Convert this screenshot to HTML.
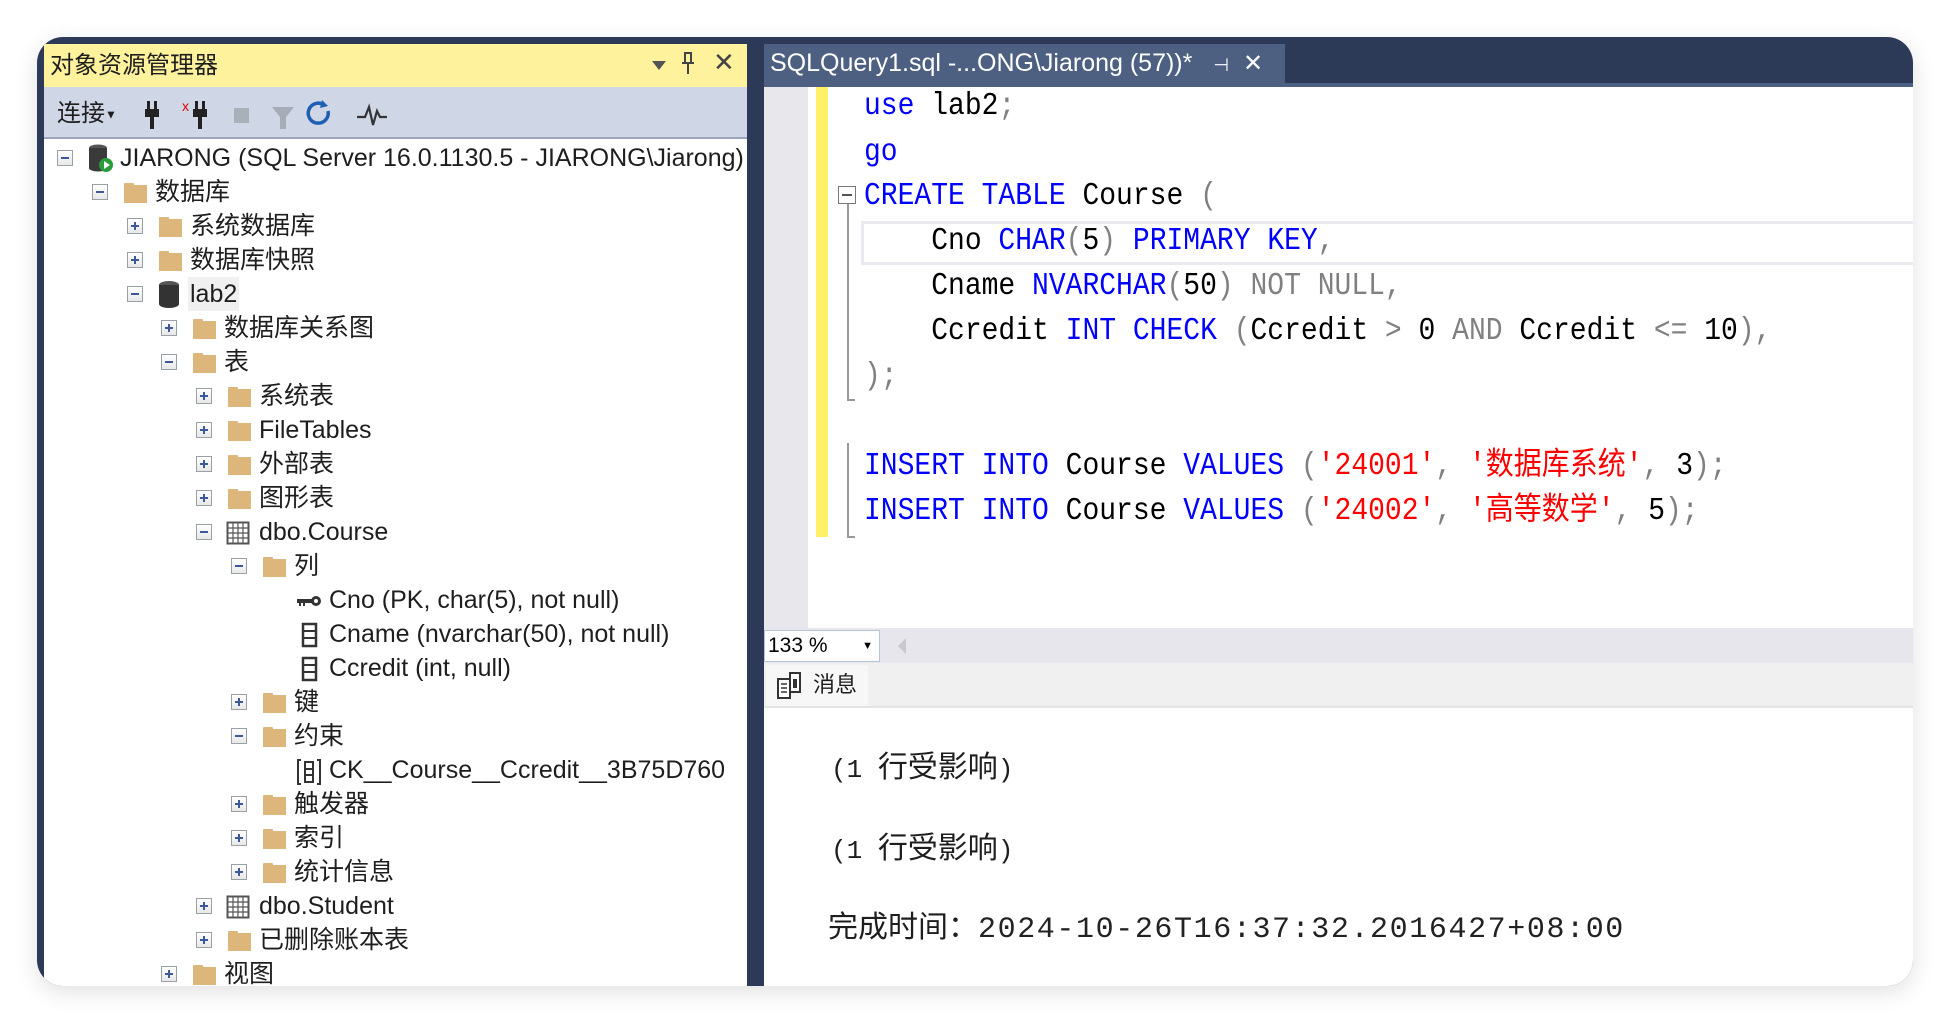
<!DOCTYPE html>
<html><head><meta charset="utf-8"><style>
*{margin:0;padding:0;box-sizing:border-box}
body{width:1950px;height:1024px;background:#fff;position:relative;overflow:hidden;font-family:"Liberation Sans","Noto Sans CJK SC",sans-serif}
#win{position:absolute;left:37px;top:37px;width:1876px;height:949px;background:#2c3a57;border-radius:26px 26px 26px 26px;overflow:hidden;box-shadow:0 6px 24px rgba(0,0,0,.12)}
.a{position:absolute}
.r{position:absolute;height:34px;line-height:34px;display:flex;align-items:center;font-size:25px;color:#1e1e1e;white-space:nowrap}
.ex{width:16px;height:16px;border:1px solid #9aa0a8;background:linear-gradient(#fff,#e8e8e8);margin-right:14px;position:relative;flex:none}
.ex.m:before,.ex.p:before{content:"";position:absolute;left:3px;top:6px;width:8px;height:2px;background:#3c5a99}
.ex.p:after{content:"";position:absolute;left:6px;top:3px;width:2px;height:8px;background:#3c5a99}
.ex.n{visibility:hidden}
.ic{width:26px;height:24px;margin-right:7px;flex:none;position:relative}
.fo:before{content:"";position:absolute;left:2px;top:3px;width:10px;height:4px;background:#dcb67a;border-radius:1px 1px 0 0}
.fo:after{content:"";position:absolute;left:2px;top:5px;width:23px;height:18px;background:#dcb67a}
.code{position:absolute;left:864px;font-family:"Liberation Mono","Noto Sans CJK SC",monospace;font-size:28px;height:45px;line-height:45px;white-space:pre;color:#000;transform:scaleY(1.12);transform-origin:left center}
.k{color:#0000ff}.g{color:#808080}.s{color:#ff0000}
</style></head><body>
<div id="win">
 <div class="a" style="left:7px;top:7px;width:703px;height:950px;background:#fff"></div>
 <div class="a" style="left:7px;top:7px;width:703px;height:43px;background:#fff29d;font-size:24px;line-height:43px;padding-left:6px;color:#1e1e1e">对象资源管理器</div>
 <div class="a" style="left:615px;top:24px;width:0;height:0;border-left:7px solid transparent;border-right:7px solid transparent;border-top:9px solid #555"></div>
 <svg class="a" style="left:643px;top:14px" width="16" height="24"><path d="M4 2h8M5 2v10M11 2v10M2 12h12M8 12v11" stroke="#444" stroke-width="2" fill="none"/></svg>
 <div class="a" style="left:676px;top:10px;font-size:26px;color:#444">✕</div>
 <div class="a" style="left:7px;top:50px;width:703px;height:52px;background:#cfd6e5;border-bottom:2px solid #9aa5bb"></div>
 <div class="a" style="left:20px;top:60px;font-size:24px;line-height:34px;color:#1e1e1e">连接<span style="font-size:12px;vertical-align:middle">▼</span></div>
 <svg class="a" style="left:105px;top:62px" width="190" height="32" viewBox="0 0 190 32">
  <g fill="#222"><rect x="5" y="2" width="3" height="8"/><rect x="12" y="2" width="3" height="8"/><rect x="3" y="10" width="14" height="8"/><rect x="8" y="18" width="4" height="12"/></g>
  <g fill="#222"><rect x="53" y="2" width="3" height="8"/><rect x="60" y="2" width="3" height="8"/><rect x="51" y="10" width="14" height="8"/><rect x="56" y="18" width="4" height="12"/></g>
  <text x="40" y="12" fill="#d00" font-size="14" font-family="Liberation Sans">x</text>
  <rect x="92" y="9" width="15" height="15" fill="#aab0ba"/>
  <path d="M130 8h22l-8 10v12h-6v-12z" fill="#a7adb8"/>
  <path d="M186 12a10 10 0 1 1-4-6" fill="none" stroke="#1e5fb3" stroke-width="3.5"/><path d="M180 1l6 6-8 2z" fill="#1e5fb3"/>
 </svg>
 <svg class="a" style="left:318px;top:64px" width="34" height="28"><path d="M2 16h8l4-10 4 18 4-14 3 6h7" fill="none" stroke="#333" stroke-width="2.2"/></svg>

 <div style="position:absolute;left:-37px;top:-37px">
 <div class="r" style="left:57px;top:141px"><span class="ex m"></span><span class="ic"><svg width="26" height="30" style="position:absolute;top:-3px"><ellipse cx="11" cy="5" rx="9" ry="3.5" fill="#555"/><rect x="2" y="5" width="18" height="20" fill="#3a3a3a"/><ellipse cx="11" cy="25" rx="9" ry="3.5" fill="#3a3a3a"/><circle cx="19" cy="22" r="7" fill="#2a9d3a"/><path d="M17 18l6 4-6 4z" fill="#fff"/></svg></span>JIARONG (SQL Server 16.0.1130.5 - JIARONG\Jiarong)</div>
 <div class="r" style="left:92px;top:175px"><span class="ex m"></span><span class="ic fo"></span>数据库</div>
 <div class="r" style="left:127px;top:209px"><span class="ex p"></span><span class="ic fo"></span>系统数据库</div>
 <div class="r" style="left:127px;top:243px"><span class="ex p"></span><span class="ic fo"></span>数据库快照</div>
 <div class="r" style="left:127px;top:277px"><span class="ex m"></span><span class="ic"><svg width="26" height="28" style="position:absolute;top:-2px"><ellipse cx="12" cy="5" rx="10" ry="4" fill="#555"/><rect x="2" y="5" width="20" height="19" fill="#333"/><ellipse cx="12" cy="24" rx="10" ry="4" fill="#333"/></svg></span><span style="background:#f0f0f0;padding:0 2px;margin-left:-2px">lab2</span></div>
 <div class="r" style="left:161px;top:311px"><span class="ex p"></span><span class="ic fo"></span>数据库关系图</div>
 <div class="r" style="left:161px;top:345px"><span class="ex m"></span><span class="ic fo"></span>表</div>
 <div class="r" style="left:196px;top:379px"><span class="ex p"></span><span class="ic fo"></span>系统表</div>
 <div class="r" style="left:196px;top:413px"><span class="ex p"></span><span class="ic fo"></span>FileTables</div>
 <div class="r" style="left:196px;top:447px"><span class="ex p"></span><span class="ic fo"></span>外部表</div>
 <div class="r" style="left:196px;top:481px"><span class="ex p"></span><span class="ic fo"></span>图形表</div>
 <div class="r" style="left:196px;top:515px"><span class="ex m"></span><span class="ic"><svg width="26" height="24"><rect x="1.5" y="1.5" width="21" height="21" fill="#fff" stroke="#555" stroke-width="2"/><path d="M1 7h22M1 12h22M1 17h22M7 1v22M12 1v22M17 1v22" stroke="#555" stroke-width="1.2"/></svg></span>dbo.Course</div>
 <div class="r" style="left:231px;top:549px"><span class="ex m"></span><span class="ic fo"></span>列</div>
 <div class="r" style="left:266px;top:583px"><span class="ex n"></span><span class="ic"><svg width="26" height="24"><rect x="1" y="10" width="16" height="4" fill="#333"/><rect x="3" y="13" width="2" height="4" fill="#333"/><rect x="7" y="13" width="2" height="4" fill="#333"/><circle cx="20" cy="12" r="5" fill="#333"/><circle cx="20" cy="12" r="2" fill="#fff"/></svg></span>Cno (PK, char(5), not null)</div>
 <div class="r" style="left:266px;top:617px"><span class="ex n"></span><span class="ic"><svg width="26" height="26"><rect x="7" y="2" width="13" height="22" fill="#fff" stroke="#333" stroke-width="2.5"/><path d="M7 9h13M7 16h13" stroke="#333" stroke-width="2"/></svg></span>Cname (nvarchar(50), not null)</div>
 <div class="r" style="left:266px;top:651px"><span class="ex n"></span><span class="ic"><svg width="26" height="26"><rect x="7" y="2" width="13" height="22" fill="#fff" stroke="#333" stroke-width="2.5"/><path d="M7 9h13M7 16h13" stroke="#333" stroke-width="2"/></svg></span>Ccredit (int, null)</div>
 <div class="r" style="left:231px;top:685px"><span class="ex p"></span><span class="ic fo"></span>键</div>
 <div class="r" style="left:231px;top:719px"><span class="ex m"></span><span class="ic fo"></span>约束</div>
 <div class="r" style="left:266px;top:753px"><span class="ex n"></span><span class="ic"><svg width="26" height="28"><path d="M5 2H2v24h3M21 2h3v24h-3" fill="none" stroke="#333" stroke-width="2"/><rect x="9" y="4" width="8" height="20" fill="#fff" stroke="#333" stroke-width="2"/><path d="M9 11h8M9 17h8" stroke="#333" stroke-width="2"/></svg></span>CK__Course__Ccredit__3B75D760</div>
 <div class="r" style="left:231px;top:787px"><span class="ex p"></span><span class="ic fo"></span>触发器</div>
 <div class="r" style="left:231px;top:821px"><span class="ex p"></span><span class="ic fo"></span>索引</div>
 <div class="r" style="left:231px;top:855px"><span class="ex p"></span><span class="ic fo"></span>统计信息</div>
 <div class="r" style="left:196px;top:889px"><span class="ex p"></span><span class="ic"><svg width="26" height="24"><rect x="1.5" y="1.5" width="21" height="21" fill="#fff" stroke="#555" stroke-width="2"/><path d="M1 7h22M1 12h22M1 17h22M7 1v22M12 1v22M17 1v22" stroke="#555" stroke-width="1.2"/></svg></span>dbo.Student</div>
 <div class="r" style="left:196px;top:923px"><span class="ex p"></span><span class="ic fo"></span>已删除账本表</div>
 <div class="r" style="left:161px;top:957px"><span class="ex p"></span><span class="ic fo"></span>视图</div>

 <div class="a" style="left:764px;top:44px;width:521px;height:39px;background:#4d6082;color:#fff;font-size:25px;line-height:39px;padding-left:6px;white-space:nowrap">SQLQuery1.sql -...ONG\Jiarong (57))* <span style="font-size:18px;margin-left:14px">⊣</span><span style="font-size:24px;margin-left:14px">✕</span></div>
 <div class="a" style="left:764px;top:83px;width:1149px;height:4px;background:#4d6082"></div>
 <div class="a" style="left:764px;top:87px;width:1149px;height:541px;background:#fff"></div>
 <div class="a" style="left:764px;top:87px;width:44px;height:541px;background:#e8e8ec"></div>
 <div class="a" style="left:816px;top:87px;width:12px;height:450px;background:#fff068"></div>
 <div class="a" style="left:861px;top:221px;width:1052px;height:44px;border:3px solid #eaeaf0;border-right:none"></div>
 <div class="a" style="left:838px;top:186px;width:18px;height:18px;border:1.5px solid #777;background:#fff"></div>
 <div class="a" style="left:842px;top:194px;width:10px;height:2px;background:#555"></div>
 <div class="a" style="left:847px;top:204px;width:1.5px;height:196px;background:#999"></div>
 <div class="a" style="left:847px;top:399px;width:8px;height:1.5px;background:#999"></div>
 <div class="a" style="left:847px;top:443px;width:1.5px;height:94px;background:#999"></div>
 <div class="a" style="left:847px;top:536px;width:8px;height:1.5px;background:#999"></div>

 <div class="code" style="top:84px"><span class="k">use</span> lab2<span class="g">;</span></div>
 <div class="code" style="top:130px"><span class="k">go</span></div>
 <div class="code" style="top:174px"><span class="k">CREATE TABLE</span> Course <span class="g">(</span></div>
 <div class="code" style="top:219px">    Cno <span class="k">CHAR</span><span class="g">(</span>5<span class="g">)</span> <span class="k">PRIMARY KEY</span><span class="g">,</span></div>
 <div class="code" style="top:264px">    Cname <span class="k">NVARCHAR</span><span class="g">(</span>50<span class="g">) NOT NULL,</span></div>
 <div class="code" style="top:309px">    Ccredit <span class="k">INT CHECK</span> <span class="g">(</span>Ccredit <span class="g">&gt;</span> 0 <span class="g">AND</span> Ccredit <span class="g">&lt;=</span> 10<span class="g">),</span></div>
 <div class="code" style="top:354px"><span class="g">);</span></div>
 <div class="code" style="top:444px"><span class="k">INSERT INTO</span> Course <span class="k">VALUES</span> <span class="g">(</span><span class="s">'24001'</span><span class="g">,</span> <span class="s">'数据库系统'</span><span class="g">,</span> 3<span class="g">);</span></div>
 <div class="code" style="top:489px"><span class="k">INSERT INTO</span> Course <span class="k">VALUES</span> <span class="g">(</span><span class="s">'24002'</span><span class="g">,</span> <span class="s">'高等数学'</span><span class="g">,</span> 5<span class="g">);</span></div>

 <div class="a" style="left:764px;top:628px;width:1149px;height:35px;background:#e6e6ec"></div>
 <div class="a" style="left:764px;top:630px;width:116px;height:32px;background:#fff;border:1.5px solid #b8c4dc;font-size:21px;line-height:30px;padding-left:3px">133 %<span style="position:absolute;right:6px;font-size:11px">▼</span></div>
 <div class="a" style="left:898px;top:638px;width:0;height:0;border-top:8px solid transparent;border-bottom:8px solid transparent;border-right:8px solid #c8c8d0"></div>
 <div class="a" style="left:764px;top:663px;width:1149px;height:45px;background:#f0f0f0;border-bottom:2px solid #e4e4e4"></div>
 <div class="a" style="left:766px;top:665px;width:102px;height:41px;background:#f7f7f7;font-size:22px;line-height:40px;padding-left:47px;color:#1e1e1e">消息</div>
 <svg class="a" style="left:776px;top:671px" width="28" height="30"><rect x="2" y="8" width="12" height="19" fill="#fff" stroke="#333" stroke-width="2"/><path d="M5 13h6M5 17h6M5 21h6" stroke="#333" stroke-width="1.5"/><rect x="14" y="2" width="10" height="19" fill="#fff" stroke="#333" stroke-width="2"/><rect x="17" y="8" width="4" height="9" fill="#333"/></svg>
 <div class="a" style="left:764px;top:708px;width:1149px;height:278px;background:#fff"></div>
 <div class="a" style="left:831px;top:742px;font-size:30px;color:#1e1e1e;white-space:nowrap"><span style="font-family:'Liberation Mono',monospace;font-size:26px">(1 </span>行受影响<span style="font-family:'Liberation Mono',monospace;font-size:26px">)</span></div>
 <div class="a" style="left:831px;top:823px;font-size:30px;color:#1e1e1e;white-space:nowrap"><span style="font-family:'Liberation Mono',monospace;font-size:26px">(1 </span>行受影响<span style="font-family:'Liberation Mono',monospace;font-size:26px">)</span></div>
 <div class="a" style="left:828px;top:902px;font-size:30px;color:#1e1e1e;white-space:nowrap">完成时间：<span style="font-family:'Liberation Mono',monospace;font-size:30px;letter-spacing:1.6px;color:#222">2024-10-26T16:37:32.2016427+08:00</span></div>
 </div>
</div>
</body></html>
